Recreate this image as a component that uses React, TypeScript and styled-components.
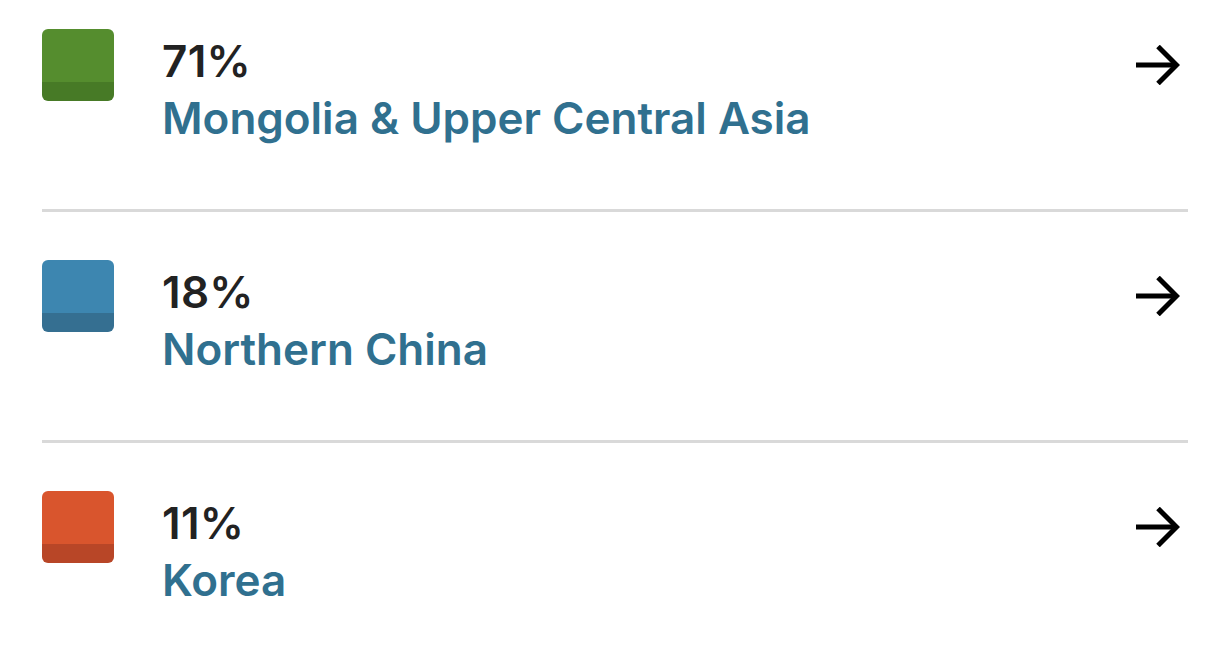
import React from "react";
import styled, { createGlobalStyle } from "styled-components";

const Global = createGlobalStyle`
  html, body { margin: 0; padding: 0; background: #ffffff; }
  body { font-family: Inter, "Noto Sans", "Liberation Sans", sans-serif; }
`;

const List = styled.ul`
  list-style: none;
  margin: 0;
  padding: 0 29px 0 42px;
`;

const Row = styled.li`
  display: flex;
  align-items: flex-start;
  padding: 48px 8px 62px 0;
  border-bottom: 3px solid #d9d9d9;
  &:first-child { padding-top: 29px; }
  &:last-child { border-bottom: none; }
`;

const Swatch = styled.div<{ $top: string; $bottom: string }>`
  flex: none;
  width: 72px;
  height: 72px;
  border-radius: 6px;
  background: linear-gradient(to bottom, ${(p) => p.$top} 0, ${(p) => p.$top} 53px, ${(p) => p.$bottom} 53px);
`;

const Text = styled.div`
  flex: 1;
  margin-left: 48px;
  margin-top: 4px;
  font-size: 44px;
  line-height: 57px;
`;

const Percent = styled.div`
  color: #222222;
  font-weight: 600;
  letter-spacing: 0.3px;
`;

const Name = styled.div`
  color: #30708f;
  font-weight: 600;
`;

const ArrowBox = styled.div`
  flex: none;
  height: 72px;
  display: flex;
  align-items: center;
`;

const Arrow = () => (
  <svg width="44" height="40" viewBox="0 0 44 40" fill="none" stroke="#000" strokeWidth="5" strokeLinecap="butt" strokeLinejoin="miter">
    <path d="M0 20 H40" />
    <path d="M22 1.5 L40.5 20 L22 38.5" />
  </svg>
);

const data = [
  { pct: "71%", name: "Mongolia & Upper Central Asia", top: "#558d2e", bottom: "#477a26" },
  { pct: "18%", name: "Northern China", top: "#3d86b0", bottom: "#356f91" },
  { pct: "11%", name: "Korea", top: "#d9552d", bottom: "#b84627" },
];

export default function App() {
  return (
    <>
      <Global />
      <List>
        {data.map((d) => (
          <Row key={d.name}>
            <Swatch $top={d.top} $bottom={d.bottom} />
            <Text>
              <Percent>{d.pct}</Percent>
              <Name>{d.name}</Name>
            </Text>
            <ArrowBox>
              <Arrow />
            </ArrowBox>
          </Row>
        ))}
      </List>
    </>
  );
}
